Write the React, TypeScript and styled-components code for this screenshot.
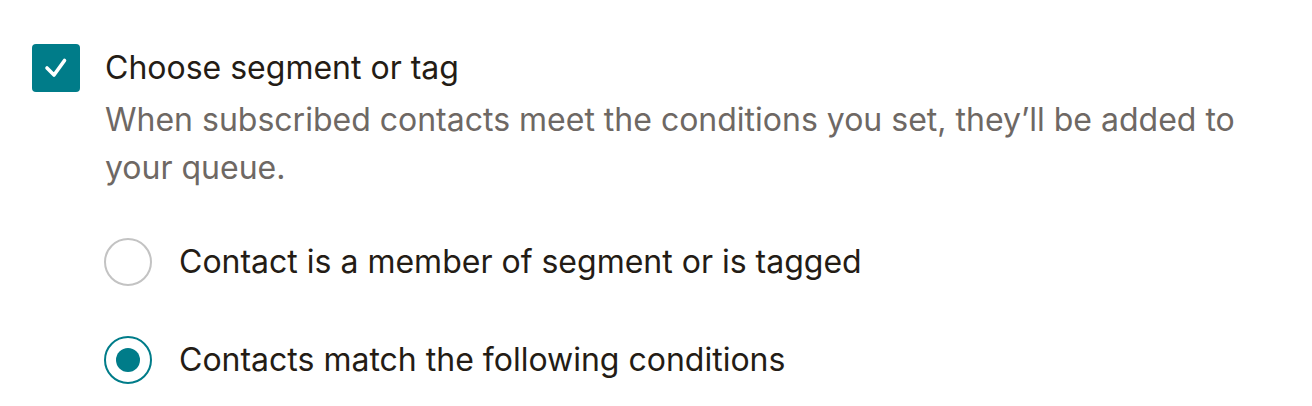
import React from "react";
import styled, { createGlobalStyle } from "styled-components";

const Global = createGlobalStyle`
  html, body { margin: 0; padding: 0; background: #ffffff; }
  body { font-family: "Inter", "Liberation Sans", sans-serif; -webkit-font-smoothing: antialiased; }
`;

const Page = styled.div`
  padding: 44px 32px 0 32px;
`;

const Row = styled.div`
  display: flex;
  align-items: flex-start;
  gap: 25px;
`;

const CheckBox = styled.div`
  flex: none;
  width: 48px;
  height: 48px;
  border-radius: 4px;
  background: #007c89;
  display: flex;
  align-items: center;
  justify-content: center;
`;

const Content = styled.div`
  display: flex;
  flex-direction: column;
`;

const Heading = styled.div`
  font-size: 32px;
  line-height: 48px;
  color: #241c15;
`;

const Description = styled.p`
  margin: 4px 0 0 0;
  font-size: 32px;
  line-height: 48px;
  color: #6e6864;
  max-width: 1150px;
`;

const RadioGroup = styled.div`
  display: flex;
  flex-direction: column;
  gap: 50px;
  margin-top: 46px;
`;

const RadioRow = styled.label`
  display: flex;
  align-items: center;
  gap: 27px;
  margin-left: -1px;
`;

const RadioCircle = styled.span<{ $checked?: boolean }>`
  flex: none;
  box-sizing: border-box;
  width: 48px;
  height: 48px;
  border-radius: 50%;
  border: 2px solid ${(p) => (p.$checked ? "#007c89" : "#c3c3c3")};
  display: flex;
  align-items: center;
  justify-content: center;
  &::after {
    content: "";
    display: ${(p) => (p.$checked ? "block" : "none")};
    width: 24px;
    height: 24px;
    border-radius: 50%;
    background: #007c89;
  }
`;

const RadioLabel = styled.span`
  font-size: 32px;
  line-height: 48px;
  color: #241c15;
`;

export default function App() {
  return (
    <Page>
      <Global />
      <Row>
        <CheckBox>
          <svg width="24" height="22" viewBox="0 0 24 22" fill="none">
            <path d="M3 11 L10 18 L20.5 3.5" stroke="#fff" strokeWidth="3.6" strokeLinecap="round" strokeLinejoin="round" />
          </svg>
        </CheckBox>
        <Content>
          <Heading>Choose segment or tag</Heading>
          <Description>
            When subscribed contacts meet the conditions you set, they’ll be added to your queue.
          </Description>
          <RadioGroup>
            <RadioRow>
              <RadioCircle />
              <RadioLabel>Contact is a member of segment or is tagged</RadioLabel>
            </RadioRow>
            <RadioRow>
              <RadioCircle $checked />
              <RadioLabel>Contacts match the following conditions</RadioLabel>
            </RadioRow>
          </RadioGroup>
        </Content>
      </Row>
    </Page>
  );
}
